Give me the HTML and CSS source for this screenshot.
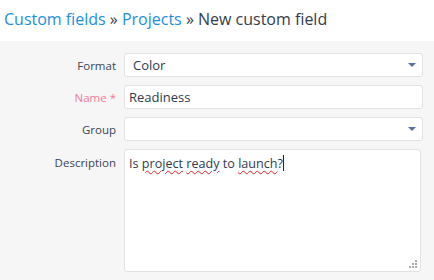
FILE: index.html
```html
<!DOCTYPE html>
<html>

<head>
    <title>New custom field</title>
    <meta name="viewport" content="width=device-width, initial-scale=1.0">
    <link rel="stylesheet" href="styles.css">
</head>

<body>
    <header class="page-head">
        <h2><a href="#">Custom fields</a> &raquo; <a href="#">Projects</a> &raquo; New custom field</h2>
    </header>

    <div class="box">
        <form class="tabular">
            <p class="row">
                <label for="format">Format</label>
                <span class="select">
                    <span class="select-text">Color</span>
                    <span class="arrow"></span>
                </span>
            </p>
            <p class="row">
                <label for="name" class="required">Name *</label>
                <input type="text" id="name" value="Readiness">
            </p>
            <p class="row">
                <label for="group">Group</label>
                <span class="select">
                    <span class="select-text"></span>
                    <span class="arrow"></span>
                </span>
            </p>
            <p class="row top">
                <label for="description">Description</label>
                <span class="textarea" id="description">Is <span class="typo">project</span> <span class="typo">ready</span> to <span class="typo">launch</span>?<span class="caret"></span>
                    <span class="grip"></span>
                </span>
            </p>
        </form>
    </div>
</body>

</html>
```

FILE: styles.css
```css
body {
    font-family: "Open Sans", sans-serif;
    margin: 0;
    background-color: #fff;
    color: #3a4556;
}

.page-head {
    height: 41px;
    padding-left: 4px;
}

h2 {
    margin: 0;
    padding-top: 8px;
    font-size: 16px;
    font-weight: normal;
    color: #333d4c;
}

h2 a {
    color: #1c8fdf;
    text-decoration: none;
}

.box {
    background-color: #f6f6f6;
    height: 239px;
    padding-top: 12px;
}

.tabular {
    margin: 0;
}

.row {
    display: flex;
    align-items: center;
    margin: 0 0 8px 0;
}

.row.top {
    align-items: flex-start;
}

.row label {
    width: 116px;
    flex: none;
    text-align: right;
    padding-right: 8px;
    font-size: 11.5px;
    color: #3a4556;
}

.row.top label {
    padding-top: 6px;
}

label.required {
    color: #f2789a;
}

.select,
input[type="text"] {
    box-sizing: border-box;
    width: 299px;
    height: 24px;
    background: #fff;
    border: 1px solid #e2e2e2;
    border-radius: 3px;
    font-family: "Open Sans", sans-serif;
    font-size: 13px;
    color: #2f3b4d;
}

.select {
    display: flex;
    align-items: center;
    justify-content: space-between;
    padding: 0 6px 0 8px;
}

input[type="text"] {
    padding: 0 4px;
    outline: none;
}

.arrow {
    width: 0;
    height: 0;
    border-left: 4px solid transparent;
    border-right: 4px solid transparent;
    border-top: 4px solid #5b6bb0;
}

.textarea {
    position: relative;
    box-sizing: border-box;
    display: block;
    width: 297px;
    height: 123px;
    background: #fff;
    border: 1px solid #e2e2e2;
    border-radius: 3px;
    padding: 5px 4px;
    font-size: 12.6px;
    color: #2f3b4d;
}

.typo {
    text-decoration: underline wavy #e0201e;
    text-decoration-thickness: 1px;
    text-underline-offset: 2px;
}

.caret {
    display: inline-block;
    width: 1px;
    height: 16px;
    background: #1d2a3c;
    vertical-align: -3px;
}

.grip {
    position: absolute;
    right: 3px;
    bottom: 3px;
    width: 8px;
    height: 8px;
    background:
        linear-gradient(#aaa, #aaa) 6px 0 / 2px 2px no-repeat,
        linear-gradient(#aaa, #aaa) 3px 3px / 2px 2px no-repeat,
        linear-gradient(#aaa, #aaa) 6px 3px / 2px 2px no-repeat,
        linear-gradient(#aaa, #aaa) 0 6px / 2px 2px no-repeat,
        linear-gradient(#aaa, #aaa) 3px 6px / 2px 2px no-repeat,
        linear-gradient(#aaa, #aaa) 6px 6px / 2px 2px no-repeat;
}
```
